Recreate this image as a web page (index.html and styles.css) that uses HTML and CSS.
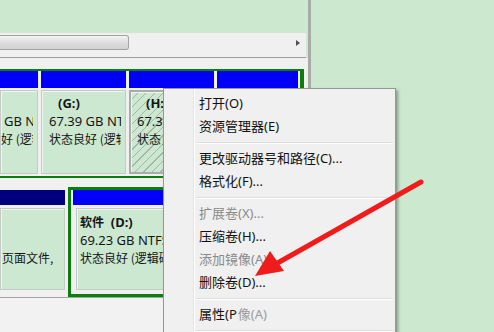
FILE: index.html
```html
<!DOCTYPE html>
<html lang="zh-CN">
<head>
<meta charset="utf-8">
<title>磁盘管理</title>
<link rel="stylesheet" href="styles.css">
</head>
<body>
<div class="screen">
  <div class="app">
    <div class="vol-list"></div>
    <div class="hscroll">
      <div class="thumb"></div>
      <div class="arrow-r"></div>
    </div>
    <div class="pane">
      <div class="ext-row">
        <div class="part w38">
          <div class="bar"></div>
          <div class="body clip">
            <div class="ln">&nbsp;</div>
            <div class="ln pl3">GB NTFS</div>
            <div class="ln"><span class="cj">好 (逻辑磁盘)</span></div>
          </div>
        </div>
        <div class="part w85">
          <div class="bar"></div>
          <div class="body">
            <div class="ln lbl">(G:)</div>
            <div class="ln">67.39 GB NTFS</div>
            <div class="ln"><span class="cj">状态良好 (逻辑磁盘)</span></div>
          </div>
        </div>
        <div class="part w85">
          <div class="bar"></div>
          <div class="body sel">
            <div class="ln lbl">(H:)</div>
            <div class="ln">67.39 GB NTFS</div>
            <div class="ln"><span class="cj">状态良好 (逻辑磁盘)</span></div>
          </div>
        </div>
        <div class="part w81">
          <div class="bar"></div>
          <div class="body">
            <div class="ln lbl">(I:)</div>
            <div class="ln">67.39 GB NTFS</div>
            <div class="ln"><span class="cj">状态良好 (逻辑磁盘)</span></div>
          </div>
        </div>
      </div>

      <div class="disk-row">
        <div class="part w65 prim">
          <div class="bar navy"></div>
          <div class="body b2 clip">
            <div class="ln">&nbsp;</div>
            <div class="ln">&nbsp;</div>
            <div class="ln pl1"><span class="cj">页面文件,</span></div>
          </div>
        </div>
        <div class="logical">
          <div class="bar b15"></div>
          <div class="body b2 dbody">
            <div class="ln lbl0"><span class="cj">软件</span>&nbsp;&nbsp;(D:)</div>
            <div class="ln">69.23 GB NTFS</div>
            <div class="ln"><span class="cj">状态良好 (逻辑磁盘)</span></div>
          </div>
        </div>
      </div>
      <div class="pane-foot"></div>
    </div>
  </div>
  <div class="desk"></div>

  <div class="menu">
    <div class="mi">打开(O)</div>
    <div class="mi">资源管理器(E)</div>
    <div class="sep"></div>
    <div class="mi">更改驱动器号和路径(C)...</div>
    <div class="mi">格式化(F)...</div>
    <div class="sep"></div>
    <div class="mi off">扩展卷(X)...</div>
    <div class="mi">压缩卷(H)...</div>
    <div class="mi off">添加镜像(A)</div>
    <div class="mi">删除卷(D)...</div>
    <div class="sep"></div>
    <div class="mi">属性(P<span class="ghost">像(A)</span></div>
    <div class="sep"></div>
  </div>

  <svg class="pointer" width="494" height="332" viewBox="0 0 494 332">
    <line x1="421" y1="182" x2="274" y2="265" stroke="#f01c1c" stroke-width="5" stroke-linecap="round"/>
    <polygon points="255,276 270,251 284,271" fill="#f01c1c"/>
  </svg>
</div>
</body>
</html>
```
FILE: styles.css
```css
* { box-sizing: border-box; }
html, body { margin: 0; padding: 0; }
body { width: 494px; height: 332px; overflow: hidden; }

.screen {
  position: relative;
  width: 494px;
  height: 332px;
  overflow: hidden;
  display: flex;
  background: #cce8cf;
  font-family: "Noto Sans", "Noto Sans CJK SC", sans-serif;
  font-size: 13px;
  color: #151515;
}

.app {
  width: 311px;
  flex: none;
  display: flex;
  flex-direction: column;
  border-right: 3px solid #a9aba9;
}

.vol-list { height: 33px; background: #cce8cf; flex: none; }

.hscroll {
  height: 25px;
  flex: none;
  margin-right: 2px;
  background: #f0f0f0;
  border-bottom: 1px solid #9d9d9d;
  display: flex;
  align-items: flex-start;
  justify-content: space-between;
}
.thumb {
  width: 129px;
  height: 15px;
  margin-top: 2px;
  border: 1px solid #a2a2a2;
  border-left: 0;
  border-radius: 0 3px 3px 0;
  background: linear-gradient(#f3f3f3, #dcdcdc 55%, #d2d2d2);
}
.arrow-r {
  width: 0;
  height: 0;
  margin-top: 7px;
  margin-right: 6px;
  border-left: 4px solid #505050;
  border-top: 3px solid transparent;
  border-bottom: 3px solid transparent;
}

.pane {
  flex: 1;
  background: #f0f0f0;
  padding-top: 11px;
  display: flex;
  flex-direction: column;
}

.ext-row {
  width: 304px;
  display: flex;
  gap: 3px;
  border: 2px solid #0b7f0b;
  border-left: 0;
  border-right-width: 4px;
  padding: 0 2px 2px 0;
}

.part { display: flex; flex-direction: column; flex: none; }
.w38 { width: 38px; }
.w85 { width: 85px; }
.w81 { width: 81px; }
.w65 { width: 65px; }

.bar { height: 17px; background: #0000f6; }
.bar.navy { height: 15px; background: #00007e; }
.bar.b15 { height: 15px; }

.body {
  margin-top: 2px;
  height: 84px;
  background: #cde8d0;
  border: 1px solid #c6c9c6;
  box-shadow: inset 1px 1px 0 #eef4ee;
  padding: 3px 0 0 7px;
  overflow: hidden;
}
.body.clip { padding-left: 0; }
.body.sel {
  border: 2px solid #a9aca9;
  padding: 2px 0 0 6px;
  background:
    repeating-linear-gradient(135deg, transparent 0 5px, #a3b5a5 5px 6px),
    #cde8d0;
}
.body.b2 { margin-top: 3px; height: 82px; padding-top: 4px; }

.ln {
  height: 18px;
  line-height: 18px;
  white-space: nowrap;
  overflow: hidden;
}
.ext-row .ln { margin-right: 4px; }
.lbl { padding-left: 9px; font-weight: 700; }
.lbl0 { font-weight: 700; }
.pl3 { padding-left: 3px; }
.pl1 { padding-left: 1px; }
.cj { font-family: "Noto Sans CJK SC", sans-serif; font-size: 12px; }
.lbl0 .cj { font-weight: 700; }

.disk-row {
  margin-top: 9px;
  display: flex;
  align-items: flex-start;
  border-bottom: 1px solid #a3a3a3;
  height: 111px;
}
.prim { margin-top: 3px; }
.logical {
  flex: 1;
  margin-left: 3px;
  border: 3px solid #0b7f0b;
  padding: 0 0 4px 2px;
  display: flex;
  flex-direction: column;
}
.dbody { margin-left: 3px; padding-left: 3px; }

.pane-foot { flex: 1; background: #f2f2f2; }

.desk { flex: 1; background: #cce8cf; }

.menu {
  position: absolute;
  left: 163px;
  top: 88px;
  width: 233px;
  height: 262px;
  padding-top: 3px;
  border: 1px solid #979797;
  box-shadow: 2px 2px 3px rgba(0, 0, 0, 0.35);
  background: linear-gradient(to right, #f0f0f0 29px, #e2e3e3 29px 30px, #ffffff 30px 31px, #f0f0f0 31px);
  font-size: 13px;
  color: #111;
}
.mi {
  height: 23px;
  line-height: 23px;
  padding-left: 35px;
  white-space: nowrap;
}
.mi.off { color: #8a8a8a; }
.ghost { color: #9a9a9a; margin-left: 1px; }
.sep {
  height: 9px;
  margin: 0 2px 0 32px;
  padding-top: 4px;
}
.sep::before {
  content: "";
  display: block;
  border-top: 1px solid #dedede;
  border-bottom: 1px solid #ffffff;
}

.pointer {
  position: absolute;
  left: 0;
  top: 0;
  pointer-events: none;
}
```
